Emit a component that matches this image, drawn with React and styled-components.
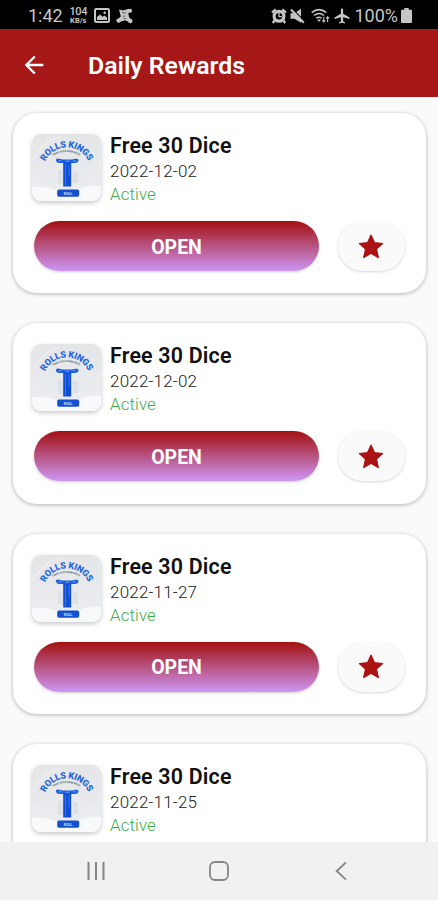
import styled, { createGlobalStyle } from "styled-components"
import { MdAirplanemodeActive, MdArrowBack } from "react-icons/md"

const rewards = [
    { id: 1, title: "Free 30 Dice", date: "2022-12-02", status: "Active" },
    { id: 2, title: "Free 30 Dice", date: "2022-12-02", status: "Active" },
    { id: 3, title: "Free 30 Dice", date: "2022-11-27", status: "Active" },
    { id: 4, title: "Free 30 Dice", date: "2022-11-25", status: "Active" },
]

const PictureIcon = () => (
    <svg width="16" height="15" viewBox="0 0 16 15">
        <rect x="1" y="1" width="14" height="13" rx="1.2" fill="none" stroke="#c6c6c6" strokeWidth="2" />
        <path d="M3 12V9l3-2.6 2.6 2.4 1.8-1.4L13 9.6V12z" fill="#c6c6c6" />
        <circle cx="10.7" cy="4.8" r="1.3" fill="#c6c6c6" />
    </svg>
)

const ShareIcon = () => (
    <svg width="17" height="16" viewBox="0 0 17 16" fill="#c6c6c6">
        <path d="M3 1.5 7 2.6 13 .8l1.5 1.8-2.2 3 .8 3.6 2.5 3-1.6 2.2-5-2.2-6.8 2.3L.8 12l4-3.4z" />
        <circle cx="14" cy="2.8" r="2.1" />
        <circle cx="14.3" cy="13" r="2.2" />
        <circle cx="2.6" cy="12.6" r="2.2" />
        <path d="M6 4.9h4.4M6.8 8.2h2.6M7.5 10.6h3" stroke="#000" strokeWidth=".5" />
    </svg>
)

const AlarmIcon = () => (
    <svg width="16" height="16" viewBox="0 0 16 16" fill="none" stroke="#c6c6c6">
        <circle cx="8" cy="8.3" r="4.9" strokeWidth="3.2" />
        <path d="M1 4.7 4.7 1.3M15 4.7 11.3 1.3M3.5 12.5 1.8 15M12.5 12.5l1.7 2.5" strokeWidth="2.3" />
        <path d="M8 5v3.6h2.8" strokeWidth="1.3" />
    </svg>
)

const MuteIcon = () => (
    <svg width="15" height="16" viewBox="0 0 15 16">
        <path d="M.5 5.2h4L11 .8v14L4.5 10.8h-4z" fill="#c6c6c6" />
        <path d="M2.6 1 14.8 13.6" stroke="#000" strokeWidth="1.2" />
        <path d="M1 1.5 13.8 14.8" stroke="#c6c6c6" strokeWidth="2.1" />
    </svg>
)

const WifiIcon = () => (
    <svg width="19" height="16" viewBox="0 0 19 16" fill="none" stroke="#c6c6c6" strokeWidth="1.6">
        <path d="M.7 4.6Q8 -1.3 15.3 4.6M3 7.5q5-4 10 0M5.3 10.2q2.7-2 5.2 0" />
        <path d="m6.5 11.8 1.5 1.8 1.5-1.8z" fill="#c6c6c6" strokeWidth=".5" />
        <path d="M12.8 8.8v5M11.2 12.3l1.6 1.6 1.4-1.6M16.6 14V9M15.2 10.4l1.4-1.6 1.6 1.6" strokeWidth="1.1" />
    </svg>
)

const BatteryIcon = () => (
    <svg width="11" height="15" viewBox="0 0 11 15">
        <path d="M3.3 0h4.4v1.8H10q1 0 1 1V14q0 1-1 1H1q-1 0-1-1V2.8q0-1 1-1h2.3z" fill="#c6c6c6" />
    </svg>
)

const StarIcon = () => (
    <svg width="26" height="25" viewBox="0 0 26 25" fill="#ab1313" stroke="#ab1313" strokeWidth="1.4" strokeLinejoin="round">
        <path d="M13 1.2 16.4 8.8 24.6 9.6 18.4 15.1 20.2 23.5 13 19.2 5.8 23.5 7.6 15.1 1.4 9.6 9.6 8.8z" />
    </svg>
)

const RewardArt = ({ id }) => (
    <svg width="69" height="67" viewBox="0 0 69 67">
        <defs>
            <linearGradient id={`bg${id}`} x1="0" y1="0" x2="0" y2="1">
                <stop offset="0" stopColor="#e3e5e7" />
                <stop offset="1" stopColor="#eceef1" />
            </linearGradient>
            <clipPath id={`clip${id}`}>
                <rect width="69" height="67" rx="9" />
            </clipPath>
            <path id={`arc${id}`} d="M13.3 27.5A23.6 23.6 0 0 1 56.5 27.5" />
            <path id={`arcSmall${id}`} d="M21 21.8Q34.5 14 48 21.8" />
        </defs>
        <g clipPath={`url(#clip${id})`}>
            <rect width="69" height="67" fill={`url(#bg${id})`} />
            <path d="M0 26 7 17 17 7 28 3M0 40l8 12M69 27l-7 18" stroke="#eceef0" strokeWidth="1.5" fill="none" />
            <path d="M0 53q13-1 24 3l21 0q12-6 24-4v15H0z" fill="#f8f9fb" />
        </g>
        <ArcText>
            <textPath href={`#arc${id}`} textLength="54" lengthAdjust="spacing">ROLLS KINGS</textPath>
        </ArcText>
        <SmallArcText>
            <textPath href={`#arcSmall${id}`} textLength="28">FREE DICE REWARDS</textPath>
        </SmallArcText>
        <path d="M26 36h5v14h-5zM41 37h5v12h-5z" fill="#dde1e9" />
        <path d="M23.8 26q1-2 3.5-1.2l3 .8h10l3-.8q2.5-.6 3.3 1.2-.4 3-3.6 3H27.4q-3 0-3.6-3z" fill="#1c5ee0" />
        <path d="M26.5 26.8h3M33.5 27.2h4M41 26.8h3" stroke="#6f9cf5" />
        <path d="M31.2 28.5h8v24h-8z" fill="#114fd2" />
        <path d="M33.5 30v21M37 30v12" stroke="#3474ea" strokeWidth="1" />
        <rect x="25.2" y="55.5" width="22" height="7.3" rx="1.8" fill="#1551cf" />
        <PlayText x="36.2" y="60.5">ROLL</PlayText>
    </svg>
)

const RewardCard = ({ reward }) => (
    <Card>
        <Info>
            <Thumb>
                <RewardArt id={reward.id} />
            </Thumb>
            <Details>
                <Name>{reward.title}</Name>
                <RewardDate>{reward.date}</RewardDate>
                <Status>{reward.status}</Status>
            </Details>
        </Info>
        <Actions>
            <OpenButton>OPEN</OpenButton>
            <StarButton aria-label="Favourite">
                <StarIcon />
            </StarButton>
        </Actions>
    </Card>
)

const App = () => {
    return (
        <>
            <GlobalStyle />
            <Screen>
                <StatusBar>
                    <StatusGroup $gap="6.5px">
                        <Clock>1:42</Clock>
                        <Speed>
                            <b>104</b>
                            <span>KB/s</span>
                        </Speed>
                        <PictureIcon />
                        <ShareIcon />
                    </StatusGroup>
                    <StatusGroup $gap="3px">
                        <AlarmIcon />
                        <MuteIcon />
                        <Spacer />
                        <WifiIcon />
                        <MdAirplanemodeActive size={18} />
                        <Percent>100%</Percent>
                        <BatteryIcon />
                    </StatusGroup>
                </StatusBar>
                <Header>
                    <BackButton aria-label="Back">
                        <MdArrowBack size={28} />
                    </BackButton>
                    <Title>Daily Rewards</Title>
                </Header>
                <List>
                    {rewards.map((reward) => <RewardCard key={reward.id} reward={reward} />)}
                </List>
                <NavBar>
                    <svg width="20" height="20" viewBox="0 0 20 20" stroke="#858585" strokeWidth="2">
                        <path d="M2.5 1v18M10 1v18M17.5 1v18" />
                    </svg>
                    <svg width="20" height="20" viewBox="0 0 20 20" fill="none" stroke="#858585" strokeWidth="1.8">
                        <rect x="1" y="1" width="18" height="18" rx="5" />
                    </svg>
                    <svg width="20" height="20" viewBox="0 0 20 20" fill="none" stroke="#858585" strokeWidth="1.8">
                        <path d="M15 1.3 5.7 10l9.3 8.7" />
                    </svg>
                </NavBar>
            </Screen>
        </>
    )
}

const GlobalStyle = createGlobalStyle`
* {
    box-sizing: border-box;
}
body {
    margin: 0;
    font-family: Roboto, "Liberation Sans", sans-serif;
}
svg {
    display: block;
    flex-shrink: 0;
}
button {
    border: none;
    padding: 0;
    font-family: inherit;
    cursor: pointer;
}
`

const Screen = styled.div`
display: flex;
flex-direction: column;
width: 438px;
height: 900px;
overflow: hidden;
background: #fafafa;
`

const StatusBar = styled.div`
display: flex;
justify-content: space-between;
flex-shrink: 0;
height: 29px;
padding: 2px 26px 0 28px;
background: #000;
color: #c6c6c6;
`

const StatusGroup = styled.div`
display: flex;
align-items: center;
gap: ${(props) => props.$gap};
`

const Clock = styled.span`
font-size: 18px;
`

const Speed = styled.span`
display: flex;
flex-direction: column;
align-items: center;
width: 18px;
b {
    font-size: 11px;
    line-height: 10px;
    font-weight: 500;
    letter-spacing: -0.4px;
}
span {
    font-size: 7.5px;
    line-height: 7px;
    font-weight: 700;
}
`

const Spacer = styled.span`
width: 0;
`

const Percent = styled.span`
font-size: 18px;
`

const Header = styled.header`
display: flex;
align-items: center;
gap: 40px;
flex-shrink: 0;
height: 68px;
padding: 3px 20px 0;
background: #a61717;
color: #fff;
`

const BackButton = styled.button`
background: none;
color: inherit;
`

const Title = styled.h1`
margin: 0;
padding-top: 1px;
font-size: 24.8px;
line-height: 31px;
font-weight: 600;
`

const List = styled.main`
display: flex;
flex-direction: column;
gap: 30px;
flex: 1;
min-height: 0;
overflow: hidden;
padding: 16px 12px 0 13px;
`

const Card = styled.section`
flex-shrink: 0;
height: 180.4px;
padding: 21px 21px 0 19px;
border-radius: 24px;
background: #fff;
box-shadow: 0 1px 4px rgba(0, 0, 0, 0.28);
`

const Info = styled.div`
display: flex;
gap: 9px;
height: 87px;
`

const Thumb = styled.div`
width: 69px;
height: 67px;
border-radius: 9px;
box-shadow: 0 2px 5px rgba(0, 0, 0, 0.22);
`

const Details = styled.div`
display: flex;
flex-direction: column;
`

const Name = styled.h2`
margin: -1px 0 0;
font-size: 21.4px;
line-height: 26px;
font-weight: 600;
letter-spacing: 0.2px;
color: #111;
`

const RewardDate = styled.span`
font-size: 17px;
line-height: 24px;
font-weight: 300;
letter-spacing: 0.2px;
color: #222;
`

const Status = styled.span`
font-size: 16.8px;
line-height: 22px;
font-weight: 300;
letter-spacing: 0.15px;
color: #3fac47;
`

const Actions = styled.div`
display: flex;
gap: 19px;
padding-left: 2px;
`

const OpenButton = styled.button`
width: 285px;
height: 50px;
padding-top: 2px;
border-radius: 25px;
background: linear-gradient(#a31010, #cd96f5);
box-shadow: 0 1px 3px rgba(0, 0, 0, 0.2);
color: #fff;
font-size: 19.5px;
font-weight: 700;
`

const StarButton = styled.button`
display: flex;
align-items: center;
justify-content: center;
width: 67px;
height: 50px;
padding-right: 1px;
border-radius: 25px;
background: #fafafa;
box-shadow: 0 1px 3px rgba(0, 0, 0, 0.16);
`

const NavBar = styled.nav`
display: flex;
align-items: center;
justify-content: space-between;
flex-shrink: 0;
height: 58px;
padding: 0 87px 0 86px;
background: #f1f1f1;
`

const ArcText = styled.text`
font-family: Roboto, sans-serif;
font-size: 9px;
font-weight: 900;
fill: #2a66dc;
`

const SmallArcText = styled.text`
font-size: 2.6px;
font-weight: 700;
fill: #555;
`

const PlayText = styled.text`
font-size: 3.6px;
font-weight: 700;
text-anchor: middle;
fill: #cfe0ff;
`

export default App
